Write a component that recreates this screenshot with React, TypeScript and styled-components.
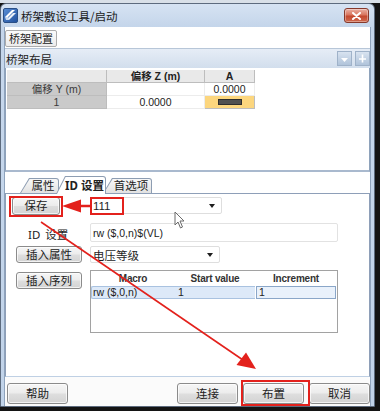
import React from "react";
import styled, { createGlobalStyle } from "styled-components";

const GlobalStyle = createGlobalStyle`
  html, body { margin: 0; padding: 0; }
  body {
    width: 380px;
    height: 411px;
    overflow: hidden;
    background: #141414;
    font-family: "Noto Sans", "Noto Sans CJK SC", sans-serif;
    color: #1e1e1e;
  }
  #root { width: 380px; height: 411px; }
`;

const Screen = styled.div`
  position: relative;
  width: 380px;
  height: 411px;
  padding-top: 3px;
  box-sizing: border-box;
  background: linear-gradient(#d9e0e8 0 3px, #141414 3px);
`;

const Window = styled.div`
  width: 375px;
  height: 404px;
  box-sizing: border-box;
  border: 1px solid #5d6b7e;
  border-radius: 6px 6px 0 0;
  background: linear-gradient(#d6e3f3, #c4d5ea 23px, #c6d7ec 80px, #c1d3e9);
  display: flex;
  flex-direction: column;
`;

const TitleBar = styled.div`
  height: 23px;
  flex: none;
  display: flex;
  align-items: center;
  padding: 0 5px 0 2px;
  gap: 3px;
`;

const TitleText = styled.span`
  font-family: "Noto Sans CJK SC", sans-serif;
  font-size: 11.5px;
  color: #1a1a1a;
`;

const CloseButton = styled.div`
  margin-left: auto;
  width: 25px;
  height: 15px;
  box-sizing: border-box;
  border: 1px solid #86392b;
  border-radius: 3px;
  background: linear-gradient(#eab0a4, #d9765f 45%, #c4482f 55%, #cf6a4f);
  box-shadow: inset 0 0 0 1px rgba(255, 255, 255, 0.35);
  display: flex;
  align-items: center;
  justify-content: center;
`;

const Client = styled.div`
  flex: 1;
  margin: 0 3px 0 3px;
  border-left: 1px solid #8fa3bc;
  border-right: 1px solid #8fa3bc;
  background: #fff;
  display: flex;
  flex-direction: column;
`;

const Toolbar = styled.div`
  height: 21px;
  flex: none;
  box-sizing: border-box;
  padding-top: 3px;
  display: flex;
  align-items: flex-start;
`;

const FlatButton = styled.div`
  height: 17px;
  box-sizing: border-box;
  padding: 0 3px;
  border: 1px solid #acacac;
  border-radius: 2px;
  background: linear-gradient(#fbfbfb, #ececec);
  font-family: "Noto Sans CJK SC", sans-serif;
  font-size: 11px;
  line-height: 15px;
  color: #222;
`;

const PanelHeader = styled.div`
  height: 20px;
  flex: none;
  box-sizing: border-box;
  border-top: 1px solid #b7c6d8;
  background: linear-gradient(#e6edf6, #d2deed);
  display: flex;
  align-items: center;
  padding: 0 0 0 1px;
  gap: 3px;
  font-family: "Noto Sans CJK SC", sans-serif;
  font-size: 11.5px;
  color: #222;
`;

const HeaderTools = styled.div`
  margin-left: auto;
  display: flex;
  gap: 3px;
`;

const MiniButton = styled.div`
  width: 15px;
  height: 15px;
  box-sizing: border-box;
  border: 1px solid #9fb2c9;
  background: linear-gradient(#d8e3f0, #b0c3da);
  display: flex;
  align-items: center;
  justify-content: center;
`;

const PanelBody = styled.div`
  height: 104px;
  flex: none;
  box-sizing: border-box;
  padding: 2px 0 0 1px;
  border-left: 1px solid #8ea2bb;
  border-right: 1px solid #8ea2bb;
  border-bottom: 2px solid #a9b9ce;
`;

const LayoutGrid = styled.div`
  display: grid;
  grid-template-columns: 100px 98px 50px;
  grid-auto-rows: 13px;
`;

type CellKind = "corner" | "colHead" | "rowHead" | "value" | "pick";

const cellBg: Record<CellKind, string> = {
  corner: "#e9e9e9",
  colHead: "#e9e9e9",
  rowHead: "#cacaca",
  value: "#ffffff",
  pick: "#fcd67e",
};

const Cell = styled.div<{ $kind: CellKind }>`
  box-sizing: border-box;
  background: ${(p) => cellBg[p.$kind]};
  border-right: 1px solid ${(p) => (p.$kind === "value" ? "#ececec" : "#bdbdbd")};
  border-bottom: 1px solid ${(p) => (p.$kind === "value" ? "#ececec" : "#bdbdbd")};
  display: flex;
  align-items: center;
  justify-content: center;
  font-family: "Liberation Sans", "Noto Sans CJK SC", sans-serif;
  font-size: 10.5px;
  font-weight: ${(p) => (p.$kind === "colHead" ? 700 : 400)};
  color: ${(p) => (p.$kind === "rowHead" ? "#3a3a3a" : "#222")};
  line-height: 1;
`;

const PickBar = styled.div`
  width: 22px;
  height: 4px;
  background: #505050;
  border: 1px solid #2e2e2e;
`;

const Spacer = styled.div`
  height: 4px;
  flex: none;
`;

const TabStrip = styled.div`
  height: 17px;
  flex: none;
  display: flex;
  align-items: flex-end;
  padding-left: 15px;
  position: relative;
  z-index: 2;
`;

const Tab = styled.div<{ $active?: boolean; $w: number }>`
  width: ${(p) => p.$w}px;
  height: ${(p) => (p.$active ? 18 : 15)}px;
  margin-left: -3px;
  margin-bottom: ${(p) => (p.$active ? -1 : 0)}px;
  box-sizing: border-box;
  padding: 1px 1px 0 1px;
  background: #8d9db2;
  border-radius: 0 3px 0 0;
  clip-path: polygon(0 100%, 9px 0, 100% 0, 100% 100%);
  position: relative;
  z-index: ${(p) => (p.$active ? 3 : 1)};
  &:first-child { margin-left: 0; }
`;

const TabFace = styled.div<{ $active?: boolean }>`
  height: 100%;
  box-sizing: border-box;
  border-radius: 0 2px 0 0;
  clip-path: polygon(0 100%, 8.6px 0, 100% 0, 100% 100%);
  background: ${(p) => (p.$active ? "#ffffff" : "linear-gradient(#f8f8f8, #e2e2e2)")};
  display: flex;
  align-items: center;
  justify-content: center;
  padding-left: 7px;
  font-family: "Noto Sans", "Noto Sans CJK SC", sans-serif;
  font-size: 11.5px;
  font-weight: ${(p) => (p.$active ? 700 : 400)};
  color: #222;
  line-height: 1;
`;

const TabContent = styled.div`
  height: 184px;
  flex: none;
  box-sizing: border-box;
  border: 1px solid #8e9fb8;
  border-bottom-color: #bfd0e4;
  padding-top: 3px;
  display: grid;
  grid-template-columns: 84px 1fr;
  grid-template-rows: 25px 24px 24px 63px;
  align-items: start;
`;

const WinButton = styled.div<{ $w: number; $h?: number; $ml?: number; $mt?: number }>`
  width: ${(p) => p.$w}px;
  height: ${(p) => p.$h ?? 17}px;
  margin-left: ${(p) => p.$ml ?? 0}px;
  margin-top: ${(p) => p.$mt ?? 0}px;
  box-sizing: border-box;
  border: 1px solid #8b8b8b;
  border-radius: 3px;
  background: linear-gradient(#f6f6f6, #ececec 48%, #dedede 52%, #d3d3d3);
  box-shadow: inset 0 0 0 1px rgba(255, 255, 255, 0.7);
  display: flex;
  align-items: center;
  justify-content: center;
  font-family: "Noto Sans CJK SC", sans-serif;
  font-size: 11.5px;
  color: #222;
  line-height: 1;
`;

const FieldLabel = styled.div`
  margin: 4px 0 0 22px;
  font-family: "Noto Sans", "Noto Sans CJK SC", sans-serif;
  font-size: 11.5px;
  color: #222;
  word-spacing: 2px;
`;

const Combo = styled.div<{ $w: number }>`
  width: ${(p) => p.$w}px;
  height: 17px;
  box-sizing: border-box;
  border: 1px solid #dedede;
  border-radius: 2px;
  background: #fff;
  display: flex;
  align-items: center;
  padding: 0 6px 0 2px;
  font-family: "Liberation Sans", "Noto Sans CJK SC", sans-serif;
  font-size: 11.5px;
  color: #1e1e1e;
`;

const ComboArrow = styled.span`
  margin-left: auto;
  width: 0;
  height: 0;
  border-left: 3.5px solid transparent;
  border-right: 3.5px solid transparent;
  border-top: 4px solid #1e1e1e;
`;

const TextBox = styled.div`
  width: 248px;
  height: 19px;
  margin-top: 1px;
  box-sizing: border-box;
  border: 1px solid #e2e2e2;
  border-radius: 2px;
  display: flex;
  align-items: center;
  padding-left: 2px;
  font-family: "Liberation Sans", sans-serif;
  font-size: 10.5px;
  color: #222;
`;

const MacroGrid = styled.div`
  width: 248px;
  height: 63px;
  box-sizing: border-box;
  border: 1px solid #a2a2a2;
  display: grid;
  grid-template-columns: 84px 80px 1fr;
  grid-template-rows: 15px 13px;
  align-content: start;
  font-family: "Liberation Sans", sans-serif;
  font-size: 10.5px;
  color: #222;
`;

const MacroHead = styled.div`
  display: flex;
  align-items: center;
  justify-content: center;
  font-weight: 700;
  font-size: 10px;
  letter-spacing: -0.2px;
  color: #333;
`;

const SelCell = styled.div<{ $first?: boolean }>`
  background: #dde9f8;
  border-top: 1px solid #a9c2e0;
  border-bottom: 1px solid #a9c2e0;
  border-left: ${(p) => (p.$first ? "1px solid #a9c2e0" : "none")};
  border-radius: ${(p) => (p.$first ? "2px 0 0 2px" : "0")};
  box-sizing: border-box;
  display: flex;
  align-items: center;
  padding-left: ${(p) => (p.$first ? 1 : 3)}px;
  line-height: 1;
`;

const EditCell = styled.div`
  margin: 0 1px 0 1px;
  box-sizing: border-box;
  border: 1px solid #8aa6c8;
  background: #e9f1fb;
  display: flex;
  align-items: center;
  padding-left: 2px;
  line-height: 1;
`;

const BottomBar = styled.div`
  flex: 1;
  display: flex;
  align-items: flex-start;
  padding: 6px 0 0 2px;
  gap: 5px;
  background: #fbfbfb;
`;

const BottomRight = styled.div`
  margin-left: auto;
  display: flex;
  gap: 5px;
`;

const Overlay = styled.svg`
  position: absolute;
  left: 0;
  top: 0;
  pointer-events: none;
`;

const AppIcon = () => (
  <svg width="15" height="15" viewBox="0 0 15 15">
    <defs>
      <linearGradient id="ig" x1="0" y1="0" x2="1" y2="1">
        <stop offset="0" stopColor="#5b8fd6" />
        <stop offset="1" stopColor="#1f4f9c" />
      </linearGradient>
    </defs>
    <rect x="0.5" y="0.5" width="14" height="14" rx="1.5" fill="url(#ig)" stroke="#2a4f86" />
    <path d="M2 9 L9 2 L12 2 L5 9 Z" fill="#fff" />
    <path d="M3 12 L10 5 L13 5 L6 12 Z" fill="#fff" opacity="0.9" />
    <path d="M2 9 L5 9 L6 12 L3 12 Z" fill="#c9d9f0" />
  </svg>
);

export default function App() {
  return (
    <>
      <GlobalStyle />
      <Screen>
        <Window>
          <TitleBar>
            <AppIcon />
            <TitleText>桥架敷设工具/启动</TitleText>
            <CloseButton>
              <svg width="9" height="8" viewBox="0 0 9 8">
                <path d="M1 1 L8 7 M8 1 L1 7" stroke="#fff" strokeWidth="2" strokeLinecap="round" />
              </svg>
            </CloseButton>
          </TitleBar>
          <Client>
            <Toolbar>
              <FlatButton>桥架配置</FlatButton>
            </Toolbar>
            <PanelHeader>
              <span>桥架布局</span>
              <HeaderTools>
                <MiniButton>
                  <svg width="9" height="9" viewBox="0 0 9 9">
                    <path d="M1 4 L8 4 L4.5 8 Z" fill="#fff" />
                  </svg>
                </MiniButton>
                <MiniButton>
                  <svg width="9" height="9" viewBox="0 0 9 9">
                    <path d="M4.5 0.5 L4.5 8.5 M1 5 L8 5" stroke="#fff" strokeWidth="1.6" />
                  </svg>
                </MiniButton>
              </HeaderTools>
            </PanelHeader>
            <PanelBody>
              <LayoutGrid>
                <Cell $kind="corner" />
                <Cell $kind="colHead">偏移 Z (m)</Cell>
                <Cell $kind="colHead">A</Cell>
                <Cell $kind="rowHead">偏移 Y (m)</Cell>
                <Cell $kind="value" />
                <Cell $kind="value">0.0000</Cell>
                <Cell $kind="rowHead">1</Cell>
                <Cell $kind="value">0.0000</Cell>
                <Cell $kind="pick">
                  <PickBar />
                </Cell>
              </LayoutGrid>
            </PanelBody>
            <Spacer />
            <TabStrip>
              <Tab $w={39}>
                <TabFace>属性</TabFace>
              </Tab>
              <Tab $w={50} $active>
                <TabFace $active>ID 设置</TabFace>
              </Tab>
              <Tab $w={49}>
                <TabFace>首选项</TabFace>
              </Tab>
            </TabStrip>
            <TabContent>
              <WinButton $w={48} $h={18} $ml={6}>保存</WinButton>
              <Combo $w={132}>
                111
                <ComboArrow />
              </Combo>
              <FieldLabel>ID 设置</FieldLabel>
              <TextBox>rw ($,0,n)$(VL)</TextBox>
              <WinButton $w={66} $ml={10}>插入属性</WinButton>
              <Combo $w={130}>
                电压等级
                <ComboArrow />
              </Combo>
              <WinButton $w={66} $ml={10} $mt={2}>插入序列</WinButton>
              <MacroGrid>
                <MacroHead>Macro</MacroHead>
                <MacroHead>Start value</MacroHead>
                <MacroHead>Increment</MacroHead>
                <SelCell $first>rw ($,0,n)</SelCell>
                <SelCell>1</SelCell>
                <EditCell>1</EditCell>
              </MacroGrid>
            </TabContent>
            <BottomBar>
              <WinButton $w={61} $h={21}>帮助</WinButton>
              <BottomRight>
                <WinButton $w={61} $h={21}>连接</WinButton>
                <WinButton $w={61} $h={21}>布置</WinButton>
                <WinButton $w={61} $h={21}>取消</WinButton>
              </BottomRight>
            </BottomBar>
          </Client>
        </Window>

        <Overlay width="380" height="411" viewBox="0 0 380 411">
          <g fill="none" stroke="#e3211c" strokeWidth="2">
            <rect x="10" y="197" width="52" height="19" />
            <rect x="91" y="198" width="32" height="16" />
            <rect x="242" y="381" width="67" height="24" />
          </g>
          <line x1="79" y1="206" x2="91" y2="206" stroke="#e3211c" strokeWidth="2.5" />
          <path d="M62 206 L81 199.5 L81 212.5 Z" fill="#e3211c" />
          <line x1="41" y1="222" x2="243" y2="360" stroke="#e3211c" strokeWidth="1.6" />
          <path d="M256 369 L236.5 365 L246 352.5 Z" fill="#e3211c" />
          <path
            d="M175 212 L175 225 L178 222 L180.5 228 L182.5 227 L180 221 L184 221 Z"
            fill="#ffffff"
            fillOpacity="0.85"
            stroke="#6b6b6b"
            strokeWidth="1"
            strokeLinejoin="round"
          />
        </Overlay>
      </Screen>
    </>
  );
}
